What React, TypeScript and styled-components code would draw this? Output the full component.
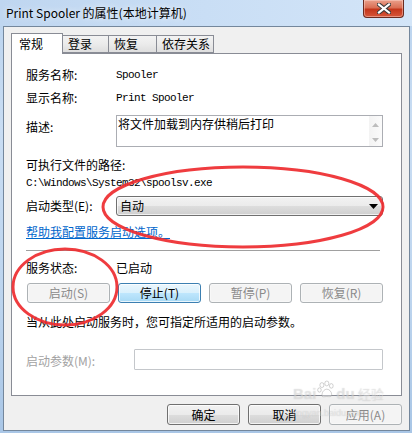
import React from 'react';
import styled, { createGlobalStyle } from 'styled-components';

const Global = createGlobalStyle`
  html, body { margin: 0; padding: 0; width: 412px; height: 433px; overflow: hidden; }
  body { font-family: "Noto Sans CJK SC", "Noto Sans", sans-serif; font-size: 12px; color: #000; }
  #root { width: 412px; height: 433px; }
`;

const Window = styled.div`
  position: relative;
  width: 412px;
  height: 433px;
  box-sizing: border-box;
  display: flex;
  flex-direction: column;
  background: linear-gradient(180deg, #bad3ee 0%, #c9ddf3 30%, #bcd4ee 70%, #a9c6e6 100%);
  overflow: hidden;
`;

const TitleBar = styled.div`
  height: 26px;
  display: flex;
  align-items: flex-start;
  background: linear-gradient(90deg, #bfd6f0 0%, #c9def5 50%, #d3e5f8 100%);
`;

const Title = styled.span`
  padding: 5px 0 0 6px;
  line-height: 16px;
  font-family: "Noto Sans CJK SC", "Noto Sans", sans-serif;
  font-size: 12px;
  color: #000;
  text-shadow: 0 0 6px rgba(255, 255, 255, 0.9);
`;

const CloseBtn = styled.div`
  margin-left: auto;
  margin-right: 8px;
  width: 41px;
  height: 18px;
  box-sizing: border-box;
  border: 1px solid #6b2a1f;
  border-top: none;
  border-radius: 0 0 4px 4px;
  background: linear-gradient(180deg, #eaa08b 0%, #da6f55 45%, #c4361b 55%, #d6563a 100%);
  box-shadow: inset 0 0 0 1px rgba(255, 220, 210, 0.45);
  display: flex;
  align-items: center;
  justify-content: center;
`;

const Client = styled.div`
  flex: 1;
  margin: 0 2px 2px 3px;
  box-sizing: border-box;
  border: 1px solid #74879c;
  background: #f0f0f0;
  padding: 6px 7px 0 7px;
  display: flex;
  flex-direction: column;
`;

const TabStrip = styled.div`
  display: flex;
  align-items: flex-end;
  height: 21px;
  margin-bottom: -1px;
  position: relative;
  z-index: 1;
`;

const Tab = styled.div<{ $active?: boolean; $w: number }>`
  box-sizing: border-box;
  width: ${p => p.$w}px;
  height: ${p => (p.$active ? 21 : 18)}px;
  margin-bottom: ${p => (p.$active ? 0 : 1)}px;
  margin-left: ${p => (p.$active ? 0 : -1)}px;
  border: 1px solid #898c95;
  border-bottom: ${p => (p.$active ? 'none' : '1px solid #898c95')};
  background: ${p =>
    p.$active ? '#ffffff' : 'linear-gradient(180deg, #f3f3f3 0%, #ebebeb 50%, #dedede 100%)'};
  padding-left: ${p => (p.$active ? 7 : 5)}px;
  line-height: ${p => (p.$active ? 19 : 16)}px;
  font-size: 12px;
  white-space: nowrap;
  overflow: hidden;
  position: relative;
  z-index: ${p => (p.$active ? 2 : 1)};
  &:first-child { margin-left: 0; }
`;

const Panel = styled.div`
  box-sizing: border-box;
  height: 343px;
  border: 1px solid #898c95;
  background: #ffffff;
  padding: 0 18px 0 14px;
  display: flex;
  flex-direction: column;
`;

const Row = styled.div<{ $mt: number; $h?: number }>`
  display: flex;
  align-items: center;
  margin-top: ${p => p.$mt}px;
  height: ${p => p.$h ?? 18}px;
`;

const TopRow = styled.div<{ $mt: number }>`
  display: flex;
  align-items: flex-start;
  margin-top: ${p => p.$mt}px;
`;

const Label = styled.span<{ $w?: number; $dim?: boolean; $mt?: number }>`
  width: ${p => (p.$w ? `${p.$w}px` : 'auto')};
  flex: none;
  line-height: 16px;
  margin-top: ${p => p.$mt ?? 0}px;
  color: ${p => (p.$dim ? '#a2a2a2' : '#000')};
  white-space: nowrap;
`;

const Mono = styled.span`
  font-family: "Liberation Mono", "DejaVu Sans Mono", monospace;
  font-size: 11px;
  letter-spacing: -0.6px;
  line-height: 16px;
  white-space: nowrap;
`;

const Line = styled.div<{ $mt: number }>`
  margin-top: ${p => p.$mt}px;
  line-height: 16px;
  height: 16px;
  white-space: nowrap;
`;

const DescBox = styled.div`
  flex: 1;
  box-sizing: border-box;
  height: 32px;
  border: 1px solid #abadb3;
  display: flex;
  background: #fff;
`;

const DescText = styled.div`
  flex: 1;
  padding: 1px 0 0 1px;
  line-height: 14px;
  font-size: 12px;
`;

const ScrollBar = styled.div`
  width: 13px;
  background: linear-gradient(90deg, #f3f3f3, #fbfbfb);
  display: flex;
  flex-direction: column;
  justify-content: space-between;
  align-items: center;
  padding: 7px 0 4px;
  box-sizing: border-box;
`;

const Combo = styled.div`
  flex: 1;
  box-sizing: border-box;
  height: 20px;
  border: 1px solid #707070;
  border-radius: 3px;
  background: linear-gradient(180deg, #f2f2f2 0%, #ebebeb 50%, #dddddd 51%, #cfcfcf 100%);
  box-shadow: inset 0 0 0 1px rgba(255, 255, 255, 0.7);
  display: flex;
  align-items: center;
  padding: 0 4px 0 3px;
  line-height: 18px;
`;

const ComboArrow = styled.span`
  margin-left: auto;
  display: flex;
`;

const Link = styled.a`
  color: #0066cc;
  text-decoration: underline;
  line-height: 16px;
  height: 16px;
  margin-top: 8px;
  white-space: nowrap;
  cursor: pointer;
  align-self: flex-start;
`;

const Separator = styled.div`
  margin-top: 10px;
  margin-right: 3px;
  height: 1px;
  background: #a0a0a0;
`;

const ButtonRow = styled.div<{ $mt: number; $end?: boolean }>`
  display: flex;
  gap: 8px;
  margin-top: ${p => p.$mt}px;
  justify-content: ${p => (p.$end ? 'flex-end' : 'space-between')};
  padding-left: ${p => (p.$end ? 0 : 1)}px;
`;

type Variant = 'normal' | 'hot' | 'disabled';

const Btn = styled.button<{ $variant: Variant; $w: number; $h?: number }>`
  box-sizing: border-box;
  width: ${p => p.$w}px;
  height: ${p => p.$h ?? 20}px;
  padding: 0;
  border-radius: 3px;
  font-family: "Noto Sans CJK SC", sans-serif;
  font-size: 12px;
  line-height: 16px;
  cursor: default;
  border: 1px solid
    ${p => (p.$variant === 'hot' ? '#3c7fb1' : p.$variant === 'disabled' ? '#adb2b5' : '#707070')};
  color: ${p => (p.$variant === 'disabled' ? '#8a8a8a' : '#000')};
  background: ${p =>
    p.$variant === 'hot'
      ? 'linear-gradient(180deg, #eaf6fd 0%, #d9f0fc 50%, #bee6fd 51%, #a7d9f5 100%)'
      : p.$variant === 'disabled'
      ? '#f4f4f4'
      : 'linear-gradient(180deg, #f2f2f2 0%, #ebebeb 50%, #dddddd 51%, #cfcfcf 100%)'};
  box-shadow: inset 0 0 0 1px
    ${p => (p.$variant === 'disabled' ? 'rgba(255,255,255,0.4)' : 'rgba(255,255,255,0.75)')};
`;

const Input = styled.div`
  flex: 1;
  box-sizing: border-box;
  height: 21px;
  border: 1px solid #c4c7cb;
  border-radius: 1px;
  background: #fff;
`;

const Overlay = styled.svg`
  position: absolute;
  left: 0;
  top: 0;
  pointer-events: none;
  z-index: 5;
`;

const Watermark = styled.div`
  position: absolute;
  left: 293px;
  top: 378px;
  pointer-events: none;
  z-index: 4;
  display: flex;
  flex-direction: column;
  align-items: flex-start;
  color: rgba(255, 255, 255, 0.35);
  text-shadow: 0 0 1px rgba(140, 140, 140, 0.4);
`;

const WmMain = styled.div`
  display: flex;
  align-items: flex-end;
  font-family: "Liberation Sans", sans-serif;
  font-weight: bold;
  font-size: 15px;
  line-height: 20px;
  height: 26px;
`;

const WmCn = styled.span`
  font-family: "Noto Sans CJK SC", sans-serif;
  font-size: 13px;
  font-weight: 400;
  margin-left: 3px;
`;

const WmSub = styled.div`
  font-family: "Liberation Sans", sans-serif;
  font-size: 9px;
  line-height: 10px;
  margin-left: 0;
  margin-top: 4px;
`;

const Up = () => (
  <svg width="7" height="4" viewBox="0 0 7 4">
    <path d="M0 4 L3.5 0 L7 4 Z" fill="#bdbdbd" />
  </svg>
);
const Down = ({ color = '#bdbdbd' }: { color?: string }) => (
  <svg width="7" height="4" viewBox="0 0 7 4">
    <path d="M0 0 L7 0 L3.5 4 Z" fill={color} />
  </svg>
);

export default function App() {
  return (
    <>
      <Global />
      <Window>
        <TitleBar>
          <Title>Print Spooler 的属性(本地计算机)</Title>
          <CloseBtn>
            <svg width="14" height="11" viewBox="0 0 14 11">
              <path
                d="M2 1.5 L12 9.5 M12 1.5 L2 9.5"
                stroke="#3a3a3a"
                strokeWidth="4.2"
                strokeLinecap="square"
              />
              <path
                d="M2 1.5 L12 9.5 M12 1.5 L2 9.5"
                stroke="#ffffff"
                strokeWidth="2.2"
                strokeLinecap="square"
              />
            </svg>
          </CloseBtn>
        </TitleBar>
        <Client>
          <TabStrip>
            <Tab $active $w={52}>常规</Tab>
            <Tab $w={47}>登录</Tab>
            <Tab $w={49}>恢复</Tab>
            <Tab $w={58}>依存关系</Tab>
          </TabStrip>
          <Panel>
            <Row $mt={12}>
              <Label $w={90}>服务名称:</Label>
              <Mono>Spooler</Mono>
            </Row>
            <Row $mt={5}>
              <Label $w={90}>显示名称:</Label>
              <Mono>Print Spooler</Mono>
            </Row>
            <TopRow $mt={8}>
              <Label $w={90} $mt={4}>描述:</Label>
              <DescBox>
                <DescText>将文件加载到内存供稍后打印</DescText>
                <ScrollBar>
                  <Up />
                  <Down />
                </ScrollBar>
              </DescBox>
            </TopRow>
            <Line $mt={10}>可执行文件的路径:</Line>
            <Line $mt={0}>
              <Mono>{'C:\\Windows\\System32\\spoolsv.exe'}</Mono>
            </Line>
            <Row $mt={7} $h={20}>
              <Label $w={90}>启动类型(E):</Label>
              <Combo>
                <span>自动</span>
                <ComboArrow>
                  <svg width="9" height="5" viewBox="0 0 9 5">
                    <path d="M0 0 L9 0 L4.5 5 Z" fill="#000" />
                  </svg>
                </ComboArrow>
              </Combo>
            </Row>
            <Link>帮助我配置服务启动选项。</Link>
            <Separator />
            <Row $mt={9} $h={16}>
              <Label $w={90}>服务状态:</Label>
              <Label>已启动</Label>
            </Row>
            <ButtonRow $mt={7}>
              <Btn $variant="disabled" $w={83}>启动(S)</Btn>
              <Btn $variant="hot" $w={83}>停止(T)</Btn>
              <Btn $variant="disabled" $w={83}>暂停(P)</Btn>
              <Btn $variant="disabled" $w={83}>恢复(R)</Btn>
            </ButtonRow>
            <Line $mt={11}>当从此处启动服务时，您可指定所适用的启动参数。</Line>
            <Row $mt={19} $h={21}>
              <Label $w={108} $dim $mt={3}>启动参数(M):</Label>
              <Input />
            </Row>
          </Panel>
          <ButtonRow $mt={8} $end>
            <Btn $variant="normal" $w={73} $h={21}>确定</Btn>
            <Btn $variant="normal" $w={73} $h={21}>取消</Btn>
            <Btn $variant="disabled" $w={73} $h={21}>应用(A)</Btn>
          </ButtonRow>
        </Client>
        <Watermark>
          <WmMain>
            Bai
            <svg width="18" height="22" viewBox="0 0 22 24" style={{ margin: '0 1px 3px' }}>
              <g fill="rgba(255,255,255,0.35)" stroke="rgba(140,140,140,0.4)" strokeWidth="1.2">
                <ellipse cx="6" cy="6" rx="2.5" ry="3" />
                <ellipse cx="12" cy="4" rx="2.5" ry="3" />
                <ellipse cx="17.5" cy="7" rx="2.3" ry="2.8" />
                <ellipse cx="3" cy="12" rx="2.2" ry="2.6" />
                <path d="M6 19 C6 13 10 11 12 11 C15 11 18 14 18 18 C18 21 14 20 12 20 C9 20 6 21 6 19 Z" />
              </g>
            </svg>
            du<WmCn>经验</WmCn>
          </WmMain>
          <WmSub>jingyan.baidu.com</WmSub>
        </Watermark>
        <Overlay width="412" height="433" viewBox="0 0 412 433">
          <g fill="none" stroke="#ee2b2f" strokeWidth="3" strokeOpacity="0.92">
            <ellipse cx="243" cy="207" rx="140" ry="40" />
            <ellipse cx="65" cy="287" rx="52" ry="38" />
          </g>
        </Overlay>
      </Window>
    </>
  );
}
